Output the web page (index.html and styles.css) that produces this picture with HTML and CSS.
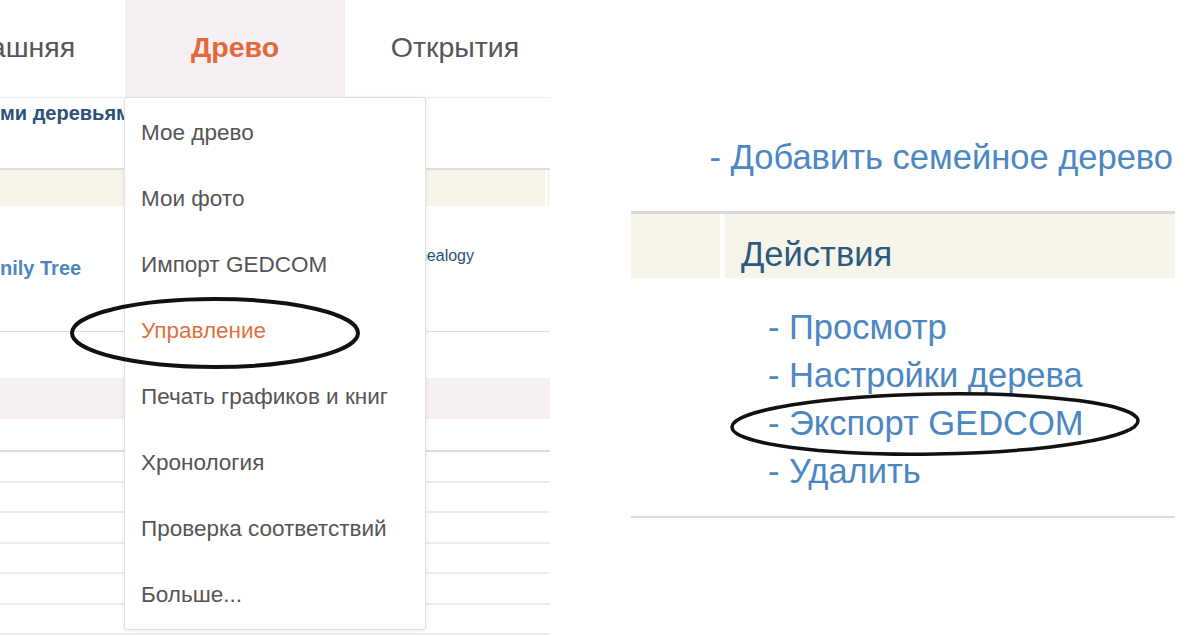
FILE: index.html
```html
<!DOCTYPE html>
<html lang="ru">
<head>
  <meta charset="UTF-8" />
  <title>Древо</title>
  <link rel="stylesheet" href="styles.css">
</head>
<body>
  <div class="page">

    <!-- left: tree menu -->
    <div class="left-shot">
      <nav class="tabs">
        <div class="tab tab-home">Домашняя</div>
        <div class="tab tab-active">Древо</div>
        <div class="tab">Открытия</div>
      </nav>

      <div class="tree-table">
        <div class="tt-title">ми деревьями</div>
        <div class="tt-head">
          <div class="tt-head-main"></div>
          <div class="tt-head-side"></div>
        </div>
        <div class="tt-row">
          <span class="tt-name">nily Tree</span>
          <span class="tt-source">Genealogy</span>
        </div>
        <div class="tt-gap"></div>
        <div class="tt-band"></div>
        <div class="tt-gap tt-gap-short"></div>
        <div class="tt-line tt-line-strong"></div>
        <div class="tt-line"></div>
        <div class="tt-line"></div>
        <div class="tt-line"></div>
        <div class="tt-line"></div>
        <div class="tt-line"></div>
        <div class="tt-line"></div>
      </div>

      <ul class="dropdown">
        <li>Мое древо</li>
        <li>Мои фото</li>
        <li>Импорт GEDCOM</li>
        <li class="current">Управление</li>
        <li>Печать графиков и книг</li>
        <li>Хронология</li>
        <li>Проверка соответствий</li>
        <li>Больше...</li>
      </ul>

      <svg class="mark mark-left" width="300" height="80" viewBox="0 0 300 80">
        <ellipse cx="148" cy="38" rx="143" ry="34" fill="none" stroke="#111" stroke-width="4"/>
      </svg>
    </div>

    <!-- right: tree actions -->
    <div class="right-shot">
      <div class="add-tree">- Добавить семейное дерево</div>

      <div class="actions-head">
        <div class="ah-blank"></div>
        <div class="ah-title">Действия</div>
      </div>

      <ul class="actions">
        <li>- Просмотр</li>
        <li>- Настройки дерева</li>
        <li>- Экспорт GEDCOM</li>
        <li>- Удалить</li>
      </ul>

      <svg class="mark mark-right" width="420" height="70" viewBox="0 0 420 70">
        <ellipse cx="208" cy="34" rx="203" ry="30" fill="none" stroke="#111" stroke-width="3.5" transform="rotate(-0.9 208 34)"/>
      </svg>
    </div>

  </div>
</body>
</html>
```

FILE: styles.css
```css
* {
  box-sizing: border-box;
}

html, body {
  height: 100%;
  overflow: hidden;
}

body {
  margin: 0;
  background: #fff;
  font-family: 'Liberation Sans', Arial, sans-serif;
  color: #555;
}

.page {
  display: flex;
  align-items: flex-start;
}

/* left screenshot */
.left-shot {
  position: relative;
  width: 550px;
  height: 636px;
  overflow: hidden;
  flex-shrink: 0;
}

.tabs {
  display: flex;
  margin-left: -95px;
  height: 97px;
}

.tab {
  width: 220px;
  flex-shrink: 0;
  display: flex;
  align-items: center;
  justify-content: center;
  padding-bottom: 2px;
  font-size: 28.5px;
  color: #555;
}

.tab-home {
  padding-right: 20px;
}

.tab-active {
  background: #f6eff3;
  color: #e26a3a;
  font-weight: bold;
}

.tree-table {
  border-top: 1px solid #f0edf0;
}

.tt-title {
  height: 72px;
  padding-top: 4px;
  font-size: 20px;
  font-weight: bold;
  color: #2c5178;
  border-bottom: 2px solid #dedede;
}

.tt-head {
  display: flex;
  height: 36px;
}

.tt-head-main {
  width: 545px;
  background: #f7f4ea;
}

.tt-head-side {
  flex: 1;
  margin-left: 2px;
  background: #f9f7f0;
}

.tt-row {
  height: 126px;
  border-bottom: 1px solid #dcdcdc;
  display: flex;
  justify-content: space-between;
  align-items: flex-start;
}

.tt-name {
  margin-top: 51px;
  font-size: 20px;
  font-weight: bold;
  color: #4c87c1;
}

.tt-source {
  margin-top: 41px;
  margin-right: 76px;
  font-size: 16px;
  color: #2c5178;
}

.tt-gap {
  height: 46px;
}

.tt-gap-short {
  height: 31px;
}

.tt-band {
  height: 41px;
  background: #f6eff3;
}

.tt-line {
  height: 30.5px;
  border-top: 2px solid #eceee9;
}

.tt-line-strong {
  border-top-color: #dcdcdc;
}

/* dropdown menu */
.dropdown {
  position: absolute;
  top: 97px;
  left: 124px;
  width: 302px;
  margin: 0;
  padding: 2px 0 1px;
  list-style: none;
  background: #fff;
  border: 1px solid #e2e0e0;
  border-radius: 3px;
  box-shadow: 0 1px 4px rgba(0, 0, 0, 0.08);
}

.dropdown li {
  height: 66px;
  line-height: 66px;
  padding-left: 16px;
  font-size: 22.5px;
  color: #555;
}

.dropdown li.current {
  color: #e0703f;
}

.mark {
  position: absolute;
  pointer-events: none;
}

.mark-left {
  left: 67px;
  top: 295px;
}

/* right screenshot */
.right-shot {
  position: relative;
  width: 544px;
  margin-left: 81px;
  flex-shrink: 0;
}

.add-tree {
  height: 211px;
  padding-top: 138px;
  padding-right: 2px;
  text-align: right;
  font-size: 34.5px;
  color: #4c87c1;
}

.actions-head {
  display: flex;
  height: 67px;
  border-top: 3px solid #d9d9de;
}

.ah-blank {
  width: 89px;
  background: #f7f4ea;
}

.ah-title {
  flex: 1;
  margin-left: 5px;
  padding: 21px 0 0 16px;
  background: #f7f4ea;
  font-size: 34.5px;
  color: #2d5a80;
}

.actions {
  margin: 0;
  padding: 25px 0 21px 137px;
  list-style: none;
  border-bottom: 2px solid #dcdce0;
}

.actions li {
  height: 48px;
  line-height: 48px;
  font-size: 34.5px;
  color: #4c87c1;
}

.mark-right {
  left: 96px;
  top: 390px;
}
```
